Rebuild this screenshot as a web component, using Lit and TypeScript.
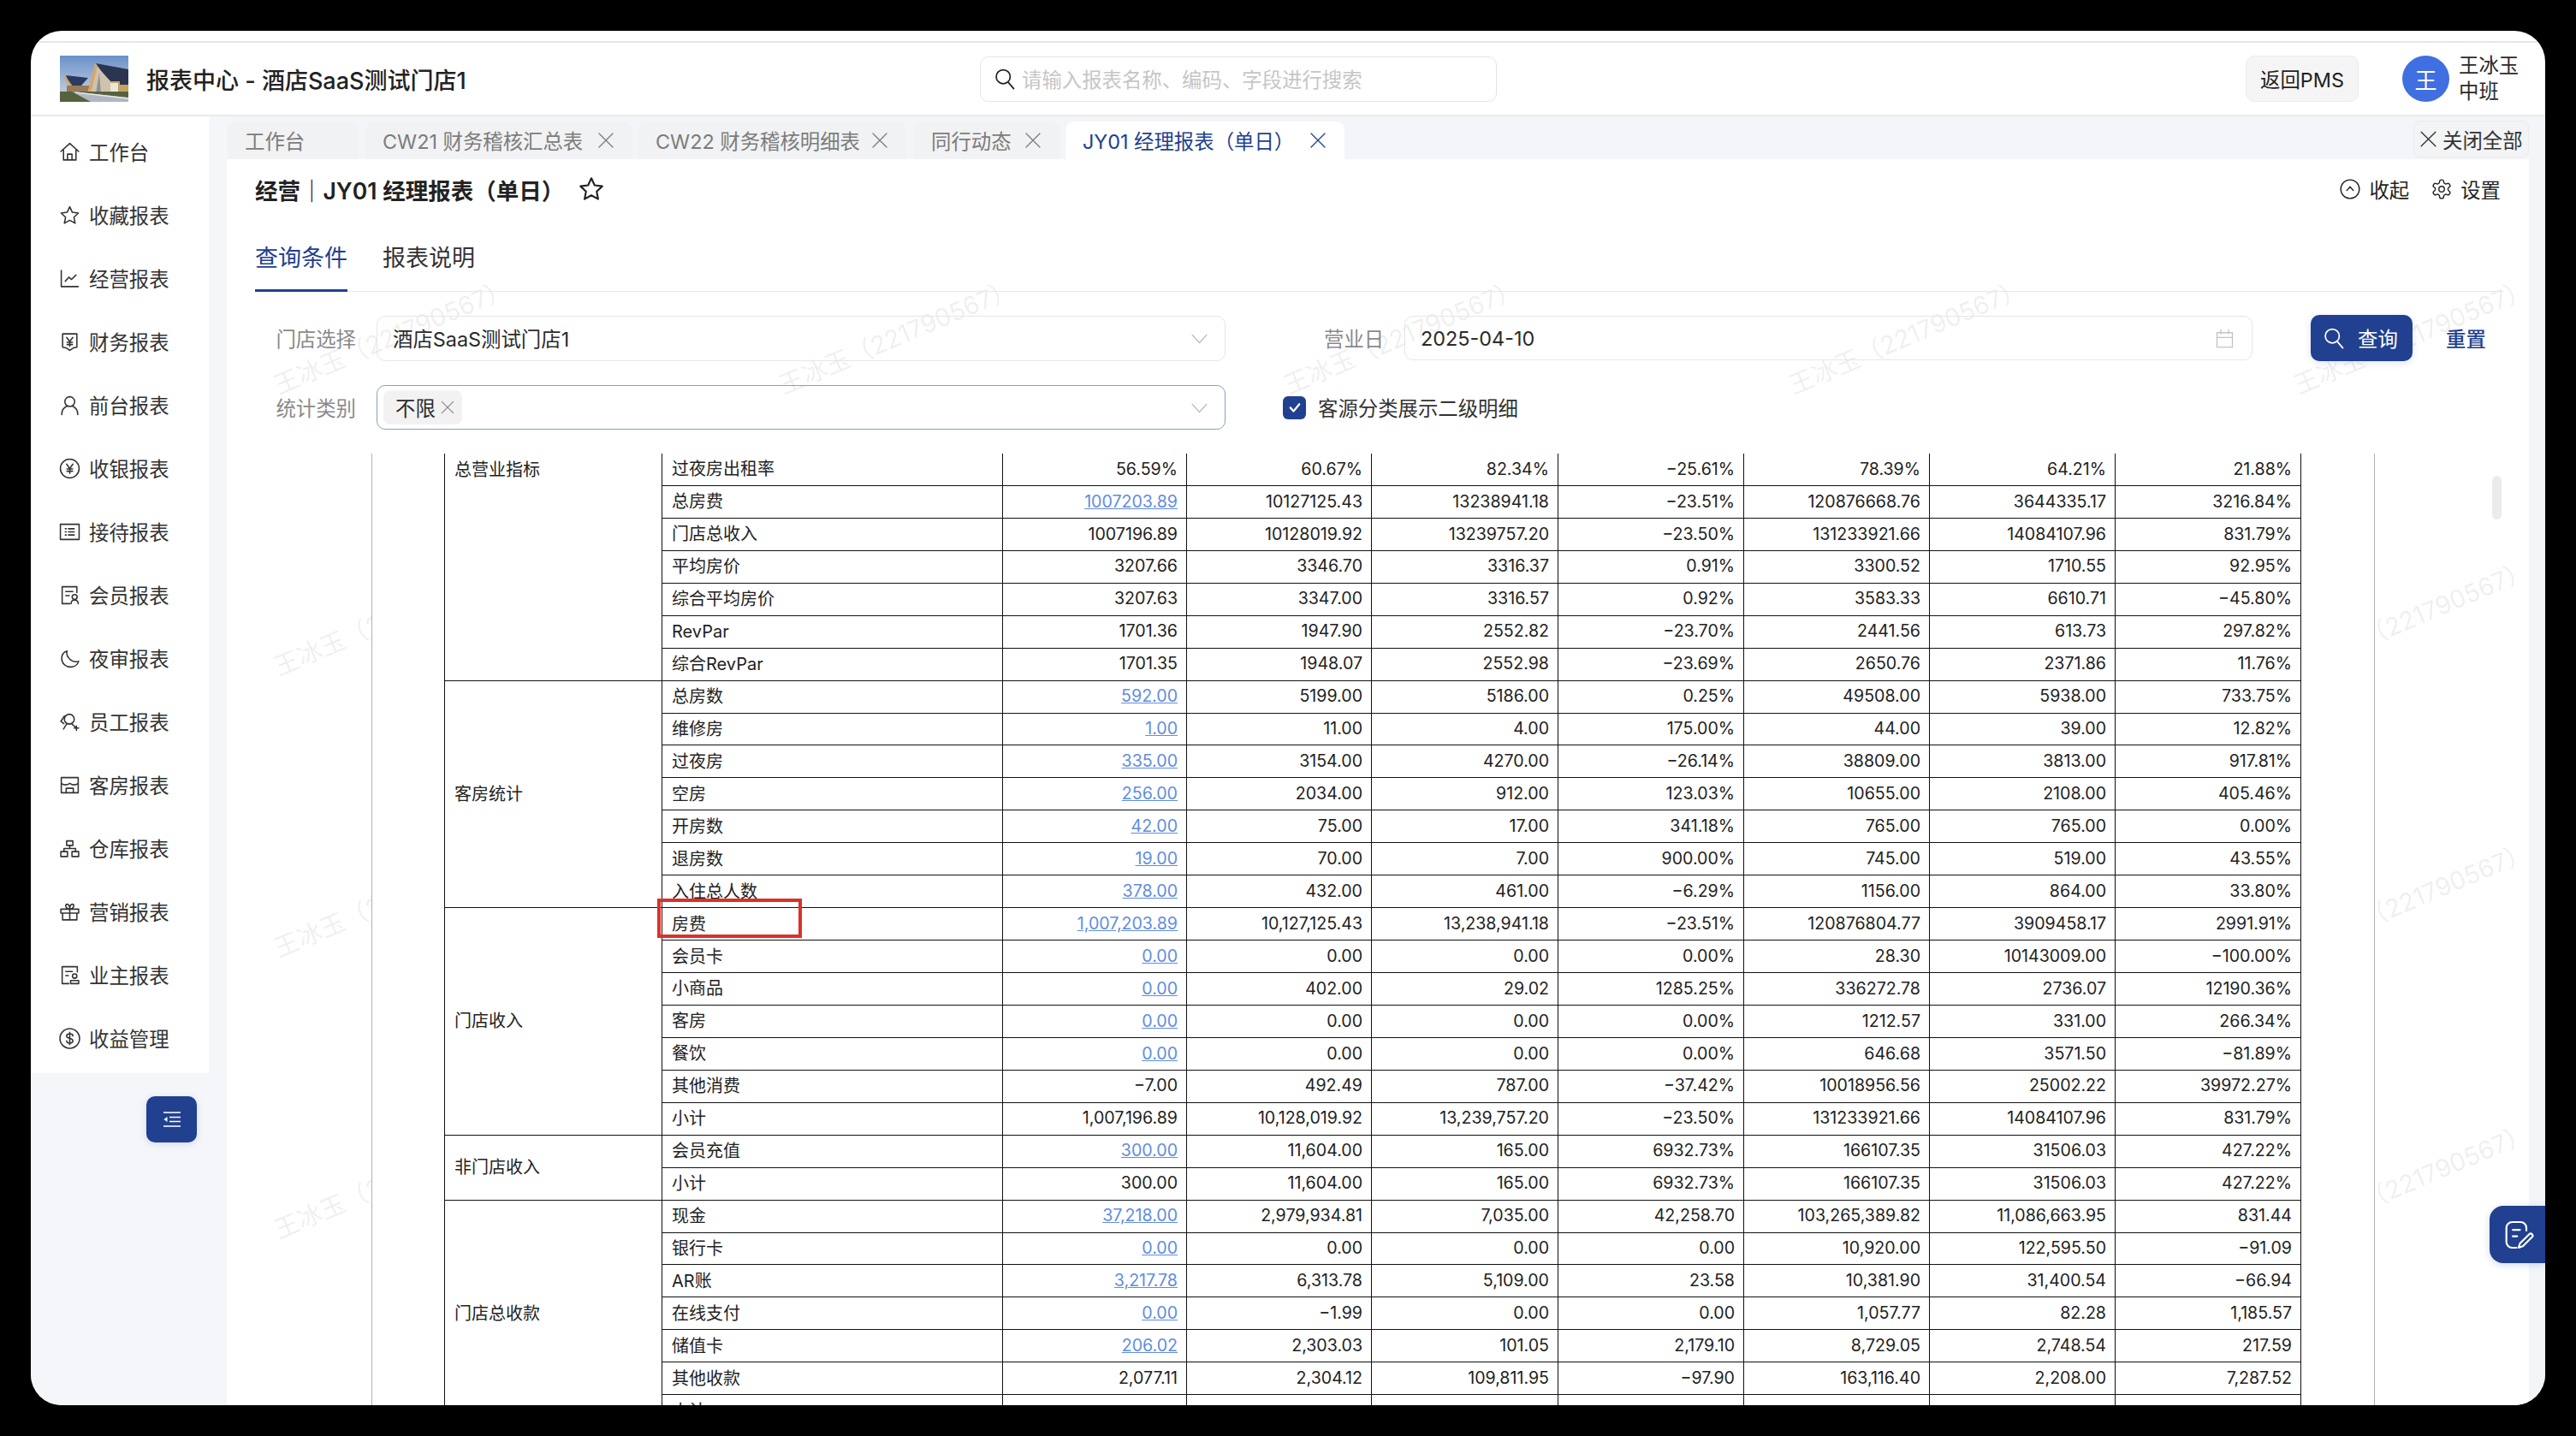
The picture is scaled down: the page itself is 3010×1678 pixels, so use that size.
import { LitElement, html, css, svg } from "lit";
import { customElement } from "lit/decorators.js";

const ico = (body: unknown, cls = "ic") => html`<svg class=${cls} viewBox="0 0 24 24" fill="none" stroke="currentColor" stroke-width="1.5" stroke-linecap="round" stroke-linejoin="round">${body}</svg>`;

const NAV: [string, unknown][] = [
  ["工作台", svg`<path d="M2 11.500 12 2.500l10 9M5 9.500V21h14V9.500M9.500 21v-6.500h5V21"/>`],
  ["收藏报表", svg`<path d="M12 2.500l2.900 6.200 6.800.9-5 4.600 1.300 6.800-6-3.300-6 3.300 1.300-6.800-5-4.600 6.800-.9z"/>`],
  ["经营报表", svg`<path d="M2.500 3v18h19M7 15l4-4.500 3 2.500 5-5"/>`],
  ["财务报表", svg`<path d="M4 3h16v15l-4 .8L12 21.500 8 18.800 4 18zM8.500 7l3.500 4.500L15.500 7M12 11.500V17M9 12.500h6M9 15h6"/>`],
  ["前台报表", svg`<circle cx="12" cy="8" r="5.500"/><path d="M3 22.500c0-5 2.500-8 6-9.500M21 22.500c0-5-2.500-8-6-9.500"/>`],
  ["收银报表", svg`<circle cx="12" cy="12" r="10.500"/><path d="M8.500 7l3.500 5 3.500-5M12 12v5.500M8.800 12.500h6.400M8.800 15h6.400"/>`],
  ["接待报表", svg`<rect x="1.500" y="3.500" width="21" height="17"/><path d="M7 8.500h1M10.500 8.500H17M7 12h1M10.500 12H17M7 15.500h1M10.500 15.500H17"/>`],
  ["会员报表", svg`<path d="M20 9V2.500H3.500v19H12M7.500 8h8M7.500 12.500h4"/><circle cx="17.500" cy="14" r="2.800"/><path d="M13.500 21.500c0-2.500 1.800-4 4-4s4 1.500 4 4"/>`],
  ["夜审报表", svg`<path d="M22 15c-1 4-5 6.500-9.500 6.500A9.500 9.500 0 0 1 3 12c0-4.200 2.500-7.500 6-8.500-2 6 5 14 13 11.500z"/>`],
  ["员工报表", svg`<circle cx="11.500" cy="9" r="5.500"/><path d="M6 5.500 2 11.500l3.500 2.500M8.500 14.500 5 20M14.500 14.500l4 3.500M19.500 16.500v5M17 19h5"/>`],
  ["客房报表", svg`<path d="M2.500 3.500h19v17h-19zM2.500 10c3 2.200 6.300 2.200 9.500 0 3.200 2.200 6.500 2.200 9.500 0M8 20.500v-5h8v5"/>`],
  ["仓库报表", svg`<path d="M8.500 3.500h7v5h-7zM2 15.500h7.500V21H2zM14.500 15.500H22V21h-7.500zM12 8.500V12M5.500 15.500V12h13v3.500"/>`],
  ["营销报表", svg`<path d="M2 9h20v4.500H2zM4 13.500V21h16v-7.500M12 9v12M12 9C7.500 9 6 3.500 9 3.500c2 0 3 2.500 3 5.500zM12 9c4.500 0 6-5.500 3-5.500-2 0-3 2.500-3 5.500z"/>`],
  ["业主报表", svg`<path d="M20.500 8.500V2.500h-17v19H11M7.500 8h7.500M7.500 12.500h3"/><circle cx="17.500" cy="13" r="2.500"/><path d="M13 21.500v-3.500h9v3.500z"/>`],
  ["收益管理", svg`<circle cx="12" cy="12" r="11"/><path d="M15.500 9c0-1.500-1.500-2.300-3.500-2.300S8.500 7.500 8.500 9s1.800 2.300 3.500 2.800 3.500 1.200 3.500 2.900-1.500 2.500-3.500 2.500-3.500-.9-3.500-2.500M12 5v14"/>`],
];

const TABS = [
  { t: "工作台", x: false, c: "t1" },
  { t: "CW21 财务稽核汇总表", x: true, c: "t2" },
  { t: "CW22 财务稽核明细表", x: true, c: "t3" },
  { t: "同行动态", x: true, c: "t4" },
  { t: "JY01 经理报表（单日）", x: true, c: "on" },
];

type Row = [string, ...string[]];
const GROUPS: { name: string; top?: boolean; rows: Row[] }[] = [
  { name: "总营业指标", top: true, rows: [
    ["过夜房出租率", "56.59%", "60.67%", "82.34%", "−25.61%", "78.39%", "64.21%", "21.88%"],
    ["总房费", "@1007203.89", "10127125.43", "13238941.18", "−23.51%", "120876668.76", "3644335.17", "3216.84%"],
    ["门店总收入", "1007196.89", "10128019.92", "13239757.20", "−23.50%", "131233921.66", "14084107.96", "831.79%"],
    ["平均房价", "3207.66", "3346.70", "3316.37", "0.91%", "3300.52", "1710.55", "92.95%"],
    ["综合平均房价", "3207.63", "3347.00", "3316.57", "0.92%", "3583.33", "6610.71", "−45.80%"],
    ["RevPar", "1701.36", "1947.90", "2552.82", "−23.70%", "2441.56", "613.73", "297.82%"],
    ["综合RevPar", "1701.35", "1948.07", "2552.98", "−23.69%", "2650.76", "2371.86", "11.76%"],
  ]},
  { name: "客房统计", rows: [
    ["总房数", "@592.00", "5199.00", "5186.00", "0.25%", "49508.00", "5938.00", "733.75%"],
    ["维修房", "@1.00", "11.00", "4.00", "175.00%", "44.00", "39.00", "12.82%"],
    ["过夜房", "@335.00", "3154.00", "4270.00", "−26.14%", "38809.00", "3813.00", "917.81%"],
    ["空房", "@256.00", "2034.00", "912.00", "123.03%", "10655.00", "2108.00", "405.46%"],
    ["开房数", "@42.00", "75.00", "17.00", "341.18%", "765.00", "765.00", "0.00%"],
    ["退房数", "@19.00", "70.00", "7.00", "900.00%", "745.00", "519.00", "43.55%"],
    ["入住总人数", "@378.00", "432.00", "461.00", "−6.29%", "1156.00", "864.00", "33.80%"],
  ]},
  { name: "门店收入", rows: [
    ["房费", "@1,007,203.89", "10,127,125.43", "13,238,941.18", "−23.51%", "120876804.77", "3909458.17", "2991.91%"],
    ["会员卡", "@0.00", "0.00", "0.00", "0.00%", "28.30", "10143009.00", "−100.00%"],
    ["小商品", "@0.00", "402.00", "29.02", "1285.25%", "336272.78", "2736.07", "12190.36%"],
    ["客房", "@0.00", "0.00", "0.00", "0.00%", "1212.57", "331.00", "266.34%"],
    ["餐饮", "@0.00", "0.00", "0.00", "0.00%", "646.68", "3571.50", "−81.89%"],
    ["其他消费", "−7.00", "492.49", "787.00", "−37.42%", "10018956.56", "25002.22", "39972.27%"],
    ["小计", "1,007,196.89", "10,128,019.92", "13,239,757.20", "−23.50%", "131233921.66", "14084107.96", "831.79%"],
  ]},
  { name: "非门店收入", rows: [
    ["会员充值", "@300.00", "11,604.00", "165.00", "6932.73%", "166107.35", "31506.03", "427.22%"],
    ["小计", "300.00", "11,604.00", "165.00", "6932.73%", "166107.35", "31506.03", "427.22%"],
  ]},
  { name: "门店总收款", rows: [
    ["现金", "@37,218.00", "2,979,934.81", "7,035.00", "42,258.70", "103,265,389.82", "11,086,663.95", "831.44"],
    ["银行卡", "@0.00", "0.00", "0.00", "0.00", "10,920.00", "122,595.50", "−91.09"],
    ["AR账", "@3,217.78", "6,313.78", "5,109.00", "23.58", "10,381.90", "31,400.54", "−66.94"],
    ["在线支付", "@0.00", "−1.99", "0.00", "0.00", "1,057.77", "82.28", "1,185.57"],
    ["储值卡", "@206.02", "2,303.03", "101.05", "2,179.10", "8,729.05", "2,748.54", "217.59"],
    ["其他收款", "2,077.11", "2,304.12", "109,811.95", "−97.90", "163,116.40", "2,208.00", "7,287.52"],
    ["小计", "", "", "", "", "", "", ""],
  ]},
];

const COLS = [254, 398, 215, 216, 218, 217, 217, 217, 217];

@customElement("app-root")
export class AppRoot extends LitElement {
  static styles = css`
    :host { display: block; width: 3010px; height: 1678px; background: #000; padding: 36px; box-sizing: border-box;
      font-family: Inter, "Noto Sans CJK SC", sans-serif; color: #333; font-size: 23.400px; }
    * { box-sizing: border-box; }
    .win { position: relative; width: 2938px; height: 1606px; border-radius: 36px; overflow: hidden; background: #fff; display: flex; flex-direction: column; }
    .topline { height: 14px; flex: none; border-bottom: 2px solid #e6e6e6; }
    .head { height: 86px; flex: none; display: flex; align-items: center; padding-left: 34px; border-bottom: 2px solid #eaeaea; }
    .brand { width: 1075px; display: flex; align-items: center; gap: 21px; font-size: 27px; font-weight: 500; color: #222; }
    .logo { width: 80px; height: 54px; display: block; filter: blur(.5px); }
    .search { width: 604px; height: 53px; border: 1px solid #e4e4e4; border-radius: 10px; display: flex; align-items: center; padding-left: 14px; gap: 6px; color: #c6c6c6; }
    .search .ic { color: #222; width: 28px; height: 28px; }
    .pms { margin-left: auto; width: 132px; height: 54px; background: #f5f5f5; border: 1px solid #ececec; border-radius: 10px; display: flex; align-items: center; justify-content: center; color: #222; }
    .avatar { margin-left: 51px; width: 55px; height: 54px; border-radius: 50%; background: #3f6fe0; color: #fff; display: flex; align-items: center; justify-content: center; font-size: 26px; }
    .names { margin-left: 11px; width: 101px; line-height: 30px; color: #2b2b2b; }
    .body { flex: 1; display: flex; min-height: 0; }
    .side { width: 229px; flex: none; background: #f4f6fa; }
    .nav { width: 208px; height: 1118px; background: #fff; padding-top: 4px; }
    .item { height: 74px; display: flex; align-items: center; padding-left: 33px; gap: 10px; color: #333; }
    .item .ic { width: 25px; height: 25px; flex: none; }
    .fold { margin: 27px 0 0 135px; width: 59px; height: 54px; background: #21408f; border-radius: 10px; display: flex; align-items: center; justify-content: center; box-shadow: 0 2px 8px rgba(33,64,143,.15); }
    .fold svg { width: 24px; height: 24px; }
    .main { flex: 1; min-width: 0; background: #f3f5f8; padding-right: 19px; display: flex; flex-direction: column; }
    .tabs { height: 50px; flex: none; display: flex; align-items: flex-end; padding-left: 1px; }
    .tab { height: 44px; background: #f1f2f3; border-radius: 10px 10px 0 0; display: flex; align-items: center; justify-content: space-between; padding: 0 19px 0 20px; color: #7c7c7c; white-space: nowrap; }
    .tab .ic { width: 24px; height: 24px; stroke-width: 1.300; }
    .t1 { width: 152px; margin-right: 9px; }
    .t2 { width: 312px; margin-right: 7px; }
    .t3 { width: 313px; margin-right: 9px; }
    .t4 { width: 170px; margin-right: 7px; }
    .on { width: 326px; background: #fff; color: #21408f; }
    .closeall { margin-left: auto; width: 135px; height: 43px; margin-bottom: 2px; background: #f3f4f6; border: 1px solid #ebebeb; border-radius: 8px; display: flex; align-items: center; padding-left: 4px; color: #333; white-space: nowrap; }
    .closeall .ic { width: 25px; height: 25px; margin-right: 4px; stroke-width: 1.300; flex: none; }
    .content { position: relative; flex: 1; min-height: 0; background: #fff; overflow: hidden; padding: 0 30px 0 33px; display: flex; flex-direction: column; }
    .wm { position: absolute; left: -103px; top: 40px; display: grid; grid-template-columns: repeat(5, 590px); grid-auto-rows: 329px; color: rgba(0,0,0,.08); font-size: 29px; pointer-events: none; }
    .wm span { display: flex; align-items: center; justify-content: center; white-space: nowrap; transform: rotate(-23deg); }
    .ptitle { position: relative; height: 70px; flex: none; display: flex; align-items: center; font-size: 26.500px; font-weight: 600; color: #222; padding-right: 3px; }
    .star { width: 34px; height: 34px; margin-left: 15px; color: #222; }
    .acts { margin-left: auto; display: flex; align-items: center; gap: 25px; font-size: 23.400px; font-weight: 400; }
    .acts div { display: flex; align-items: center; gap: 9px; }
    .acts .ic { width: 26px; height: 26px; stroke-width: 1.300; }
    .qtabs { position: relative; flex: none; display: flex; gap: 41px; font-size: 27px; border-bottom: 1px solid #e8e8e8; height: 85px; }
    .qtab { height: 85px; line-height: 36px; padding-top: 28px; color: #333; }
    .qon { color: #21408f; border-bottom: 3px solid #21408f; }
    .form { position: relative; flex: none; padding-top: 27px; height: 189px; }
    .frow { display: flex; align-items: center; height: 54px; margin-bottom: 27px; }
    .lab { width: 118px; text-align: right; margin-right: 24px; color: #8a8a8a; }
    .field { position: relative; width: 992px; height: 53px; border: 1px solid #e6e6e6; border-radius: 10px; display: flex; align-items: center; padding-left: 18px; color: #2b2b2b; }
    .focus { height: 52px; border-color: #8aa0bd; padding-left: 7px; }
    .field .chev { position: absolute; right: 17px; width: 25px; height: 25px; color: #b5b5b5; stroke-width: 1.200; }
    .tag { width: 92px; height: 40px; background: #f2f2f2; border-radius: 8px; display: flex; align-items: center; padding-left: 14px; gap: 4px; }
    .tag .ic { width: 20px; height: 20px; color: #8a8a8a; }
    .lab2 { width: 68px; margin: 0 26px 0 115px; white-space: nowrap; color: #8a8a8a; }
    .date { width: 991px; height: 52px; }
    .date .chev { width: 27px; height: 27px; right: 18px; color: #c4c4c4; }
    .btn { margin-left: 68px; width: 119px; height: 54px; background: #21408f; color: #fff; border-radius: 10px; display: flex; align-items: center; padding-left: 13px; gap: 14px; box-shadow: 0 2px 8px rgba(33,64,143,.15); }
    .btn .ic { width: 28px; height: 28px; }
    .reset { margin-left: 39px; color: #21408f; font-weight: 500; }
    .check { margin-left: 67px; display: flex; align-items: center; gap: 14px; color: #333; }
    .box { width: 27px; height: 27px; background: #21408f; border-radius: 6px; display: flex; align-items: center; justify-content: center; color: #fff; }
    .box .ic { width: 18px; height: 18px; }
    .scroll { position: relative; flex: 1; min-height: 0; overflow: hidden; margin-left: 136px; width: 2341px; background: #fff; border-left: 1px solid #b0b0b0; border-right: 1px solid #b0b0b0; padding-left: 84px; }
    table { border-collapse: collapse; table-layout: fixed; width: 2169px; margin-top: -1px; font-size: 20px; color: #222; background: #fff; }
    td { height: 37.950px; padding: 0 11px 0 11px; border: 1px solid #111; line-height: 1; white-space: nowrap; }
    .num { text-align: right; font-size: 19.600px; padding-right: 10px; }
    .num a { color: #5f8ddf; text-decoration: underline; }
    .grp { vertical-align: middle; }
    .gtop { vertical-align: top; padding-top: 9px; }
    .thumb { position: absolute; left: 2647px; top: 370px; width: 11px; height: 51px; border-radius: 6px; background: #ebebeb; }
    .mark { position: absolute; left: 732px; top: 1014px; width: 169px; height: 46px; border: 4px solid #d9322a; pointer-events: none; }
    .float { position: absolute; right: 0; top: 1373px; width: 65px; height: 67px; background: #21408f; border-radius: 16px 0 0 16px; display: flex; align-items: center; justify-content: center; color: #fff; box-shadow: 0 2px 8px rgba(33,64,143,.2); }
    .float svg { width: 40px; height: 40px; }
  `;

  private x() { return ico(svg`<path d="M4 4l16 16M20 4 4 20"/>`); }
  private chev() { return ico(svg`<path d="M4 8l8 9 8-9"/>`, "chev"); }
  private mag() { return ico(svg`<circle cx="10.500" cy="10" r="7"/><path d="M15.500 15.500 21 22"/>`); }

  render() {
    return html`<div class="win">
      <div class="topline"></div>
      <header class="head">
        <div class="brand">
          <svg class="logo" viewBox="0 0 80 54" preserveAspectRatio="none">
            <defs><linearGradient id="sky" x1="0" y1="0" x2="0" y2="1"><stop offset="0" stop-color="#6a90c8"/><stop offset=".6" stop-color="#a9bedb"/><stop offset="1" stop-color="#cfd4da"/></linearGradient></defs>
            <rect width="80" height="54" fill="url(#sky)"/>
            <path d="M7 23 33 26 24 36 12 36z" fill="#2d3a60"/>
            <path d="M6 23 15 36 11 36 4 26z" fill="#c9a877"/>
            <path d="M8 35H37V43H8z" fill="#9a7b55"/>
            <path d="M42 9 80 16V30L58 32z" fill="#2c3550"/>
            <path d="M41 10 60 31V44H34z" fill="#cfc3ab"/>
            <path d="M41 9 44 12 36 44H32z" fill="#d7a66c"/>
            <path d="M46 20 48 44H42z" fill="#8d9296"/>
            <path d="M60 30H80V44H60z" fill="#c2a45e"/>
            <path d="M59 32H68V45H59z" fill="#ebe6da"/>
            <path d="M70 30H80V34H70z" fill="#2c3550"/>
            <path d="M0 42H80V54H0z" fill="#56623f"/>
            <path d="M14 42 80 49V54H36z" fill="#aeb7c2"/>
            <path d="M18 43 80 50" stroke="#e6e9ec" stroke-width="1.500"/>
          </svg>
          <span>报表中心 - 酒店SaaS测试门店1</span>
        </div>
        <div class="search">${this.mag()}<span>请输入报表名称、编码、字段进行搜索</span></div>
        <div class="pms">返回PMS</div>
        <div class="avatar">王</div>
        <div class="names">王冰玉<br />中班</div>
      </header>
      <div class="body">
        <aside class="side">
          <nav class="nav">${NAV.map(([t, i]) => html`<div class="item">${ico(i)}<span>${t}</span></div>`)}</nav>
          <div class="fold"><svg viewBox="0 0 24 24" fill="none" stroke="#fff" stroke-width="1.500"><path d="M2 4h20M9 9.500h13M9 14.500h13M2 20h20"/><path d="M6.500 9v6L2.500 12z" fill="#fff" stroke="none"/></svg></div>
        </aside>
        <main class="main">
          <div class="tabs">
            ${TABS.map((t) => html`<div class="tab ${t.c}"><span>${t.t}</span>${t.x ? this.x() : ""}</div>`)}
            <div class="closeall">${this.x()}<span>关闭全部</span></div>
          </div>
          <section class="content">
            <div class="wm">${Array.from({ length: 20 }, () => html`<span>王冰玉（221790567）</span>`)}</div>
            <div class="ptitle">
              <span>经营｜JY01 经理报表（单日）</span>
              ${ico(svg`<path d="M12 3l2.700 5.800 6.300.8-4.600 4.300 1.200 6.300L12 17.100 6.400 20.200l1.200-6.300L3 9.600l6.300-.8z"/>`, "star")}
              <div class="acts">
                <div>${ico(svg`<circle cx="12" cy="12" r="10"/><path d="M8.500 13.500 12 9.500l3.500 4"/>`)}<span>收起</span></div>
                <div>${ico(svg`<path d="M12.220 2h-.44a2 2 0 0 0-2 2v.18a2 2 0 0 1-1 1.730l-.43.25a2 2 0 0 1-2 0l-.15-.08a2 2 0 0 0-2.730.73l-.22.38a2 2 0 0 0 .73 2.730l.15.1a2 2 0 0 1 1 1.720v.51a2 2 0 0 1-1 1.740l-.15.09a2 2 0 0 0-.73 2.730l.22.38a2 2 0 0 0 2.730.73l.15-.08a2 2 0 0 1 2 0l.43.25a2 2 0 0 1 1 1.730V20a2 2 0 0 0 2 2h.44a2 2 0 0 0 2-2v-.18a2 2 0 0 1 1-1.730l.43-.25a2 2 0 0 1 2 0l.15.08a2 2 0 0 0 2.730-.73l.22-.39a2 2 0 0 0-.73-2.730l-.15-.08a2 2 0 0 1-1-1.740v-.5a2 2 0 0 1 1-1.740l.15-.09a2 2 0 0 0 .73-2.730l-.22-.38a2 2 0 0 0-2.730-.73l-.15.08a2 2 0 0 1-2 0l-.43-.25a2 2 0 0 1-1-1.730V4a2 2 0 0 0-2-2z"/><circle cx="12" cy="12" r="3"/>`)}<span>设置</span></div>
              </div>
            </div>
            <div class="qtabs"><div class="qtab qon">查询条件</div><div class="qtab">报表说明</div></div>
            <div class="form">
              <div class="frow">
                <span class="lab">门店选择</span>
                <div class="field"><span>酒店SaaS测试门店1</span>${this.chev()}</div>
                <span class="lab2">营业日</span>
                <div class="field date"><span>2025-04-10</span>${ico(svg`<path d="M4 6h16v15H4zM4 11h16M8 3v4M16 3v4"/>`, "chev")}</div>
                <div class="btn">${this.mag()}<span>查询</span></div>
                <span class="reset">重置</span>
              </div>
              <div class="frow">
                <span class="lab">统计类别</span>
                <div class="field focus"><div class="tag"><span>不限</span>${this.x()}</div>${this.chev()}</div>
                <div class="check"><span class="box">${ico(svg`<path d="M5 12.500l5 5.500 9-11" stroke-width="3"/>`)}</span><span>客源分类展示二级明细</span></div>
              </div>
            </div>
            <div class="scroll">
              <table>
                <colgroup>${COLS.map((w) => html`<col width=${w} />`)}</colgroup>
                <tbody>
                  ${GROUPS.map((g) => g.rows.map((r, i) => html`<tr>
                    ${i === 0 ? html`<td class="grp ${g.top ? "gtop" : ""}" rowspan=${g.rows.length}>${g.name}</td>` : ""}
                    <td>${r[0]}</td>
                    ${r.slice(1).map((v) => html`<td class="num">${v.startsWith("@") ? html`<a>${v.slice(1)}</a>` : v}</td>`)}
                  </tr>`))}
                </tbody>
              </table>
            </div>
            <div class="thumb"></div>
          </section>
        </main>
      </div>
      <div class="mark"></div>
      <div class="float"><svg viewBox="0 0 24 24" fill="none" stroke="currentColor" stroke-width="1.300" stroke-linecap="round" stroke-linejoin="round"><path d="M18 9V7a4 4 0 0 0-4-4H8a4 4 0 0 0-4 4v10a4 4 0 0 0 4 4h3"/><path d="M8.500 8.500h5M8.500 13h3"/><path d="M22 13.500l-6.500 6.500-3 1 1-3L20 11.500a1.400 1.400 0 0 1 2 2z"/></svg></div>
    </div>`;
  }
}
